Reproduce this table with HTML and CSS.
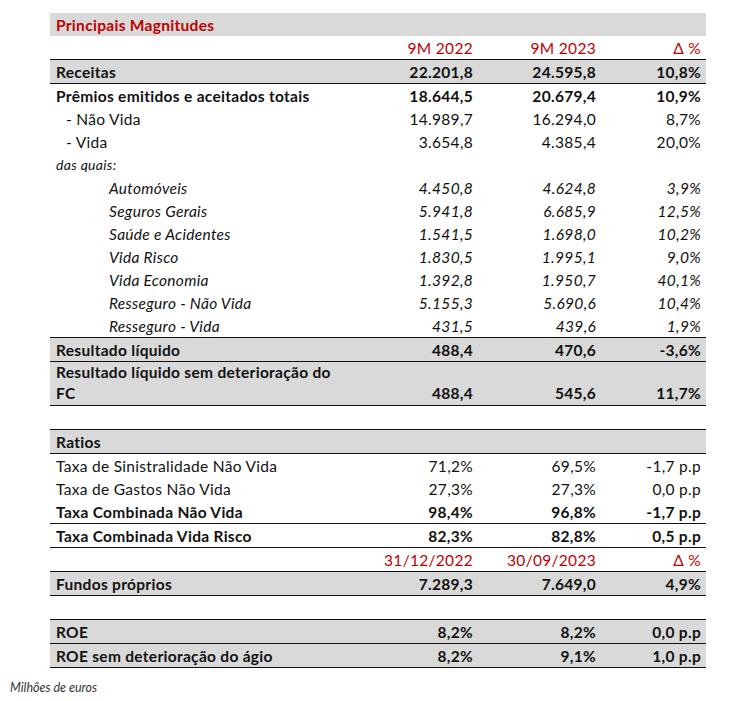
FILE: index.html
```html
<!DOCTYPE html>
<html lang="pt">
<head>
<meta charset="utf-8">
<title>Principais Magnitudes</title>
<link rel="stylesheet" href="styles.css">
</head>
<body>
<div class="page">
  <table class="mag">
    <colgroup>
      <col class="c-label"><col class="c-n1"><col class="c-n2"><col class="c-n3">
    </colgroup>
    <tbody>
      <tr class="gray"><td class="title" colspan="4">Principais Magnitudes</td></tr>
      <tr class="hdr line"><td></td><td>9M 2022</td><td>9M 2023</td><td>Δ %</td></tr>
      <tr class="gray bold line"><td>Receitas</td><td>22.201,8</td><td>24.595,8</td><td>10,8%</td></tr>
      <tr class="bold"><td>Prêmios emitidos e aceitados totais</td><td>18.644,5</td><td>20.679,4</td><td>10,9%</td></tr>
      <tr><td class="ind1">- Não Vida</td><td>14.989,7</td><td>16.294,0</td><td>8,7%</td></tr>
      <tr><td class="ind1">- Vida</td><td>3.654,8</td><td>4.385,4</td><td>20,0%</td></tr>
      <tr><td class="note">das quais:</td><td></td><td></td><td></td></tr>
      <tr class="it"><td class="ind2">Automóveis</td><td>4.450,8</td><td>4.624,8</td><td>3,9%</td></tr>
      <tr class="it"><td class="ind2">Seguros Gerais</td><td>5.941,8</td><td>6.685,9</td><td>12,5%</td></tr>
      <tr class="it"><td class="ind2">Saúde e Acidentes</td><td>1.541,5</td><td>1.698,0</td><td>10,2%</td></tr>
      <tr class="it"><td class="ind2">Vida Risco</td><td>1.830,5</td><td>1.995,1</td><td>9,0%</td></tr>
      <tr class="it"><td class="ind2">Vida Economia</td><td>1.392,8</td><td>1.950,7</td><td>40,1%</td></tr>
      <tr class="it"><td class="ind2">Resseguro - Não Vida</td><td>5.155,3</td><td>5.690,6</td><td>10,4%</td></tr>
      <tr class="it line"><td class="ind2">Resseguro - Vida</td><td>431,5</td><td>439,6</td><td>1,9%</td></tr>
      <tr class="gray bold line"><td>Resultado líquido</td><td>488,4</td><td>470,6</td><td>-3,6%</td></tr>
      <tr class="gray bold line two"><td>Resultado líquido sem deterioração do<br>FC</td><td>488,4</td><td>545,6</td><td>11,7%</td></tr>
      <tr class="line"><td></td><td></td><td></td><td></td></tr>
      <tr class="gray bold line"><td>Ratios</td><td></td><td></td><td></td></tr>
      <tr><td>Taxa de Sinistralidade Não Vida</td><td>71,2%</td><td>69,5%</td><td>-1,7 p.p</td></tr>
      <tr><td>Taxa de Gastos Não Vida</td><td>27,3%</td><td>27,3%</td><td>0,0 p.p</td></tr>
      <tr class="bold line"><td>Taxa Combinada Não Vida</td><td>98,4%</td><td>96,8%</td><td>-1,7 p.p</td></tr>
      <tr class="bold line"><td>Taxa Combinada Vida Risco</td><td>82,3%</td><td>82,8%</td><td>0,5 p.p</td></tr>
      <tr class="hdr line"><td></td><td>31/12/2022</td><td>30/09/2023</td><td>Δ %</td></tr>
      <tr class="gray bold line"><td>Fundos próprios</td><td>7.289,3</td><td>7.649,0</td><td>4,9%</td></tr>
      <tr class="line"><td></td><td></td><td></td><td></td></tr>
      <tr class="gray bold line"><td>ROE</td><td>8,2%</td><td>8,2%</td><td>0,0 p.p</td></tr>
      <tr class="gray bold line"><td>ROE sem deterioração do ágio</td><td>8,2%</td><td>9,1%</td><td>1,0 p.p</td></tr>
    </tbody>
  </table>
  <p class="foot">Milhões de euros</p>
</div>
</body>
</html>
```

FILE: styles.css
```css
html, body {
  margin: 0;
  padding: 0;
  background: #ffffff;
}

.page {
  padding: 13px 0 0 0;
  font-family: Lato, "Open Sans", "Liberation Sans", sans-serif;
  color: #111111;
}

.mag {
  margin-left: 50px;
  width: 656px;
  border-collapse: collapse;
  table-layout: fixed;
  font-size: 15.5px;
  letter-spacing: 0.3px;
}

.c-label { width: 300px; }
.c-n1 { width: 128px; }
.c-n2 { width: 123px; }
.c-n3 { width: 105px; }

.mag td {
  height: 22px;
  padding: 0 5px 1px 6px;
  vertical-align: bottom;
  line-height: 20px;
  white-space: nowrap;
  text-align: right;
}

.mag td:first-child {
  text-align: left;
}

.mag tr.gray td {
  background: #d9d9d9;
}

.mag tr.line td {
  border-bottom: 1px solid #111111;
}

.mag tr.bold td {
  font-weight: 700;
}

.mag tr.it td {
  font-style: italic;
}

.mag tr.hdr td {
  color: #c00000;
}

.mag td.title {
  color: #c00000;
  font-weight: 700;
}

.mag tr.two td {
  height: 42px;
  line-height: 21px;
}

.mag td.ind1 {
  padding-left: 16px;
}

.mag td.ind2 {
  padding-left: 59px;
}

.mag td.note {
  font-style: italic;
  font-size: 14px;
  letter-spacing: 0.3px;
}

.foot {
  margin: 13px 0 0 10px;
  font-size: 12.5px;
  font-style: italic;
  color: #333333;
  line-height: 14px;
}
```
